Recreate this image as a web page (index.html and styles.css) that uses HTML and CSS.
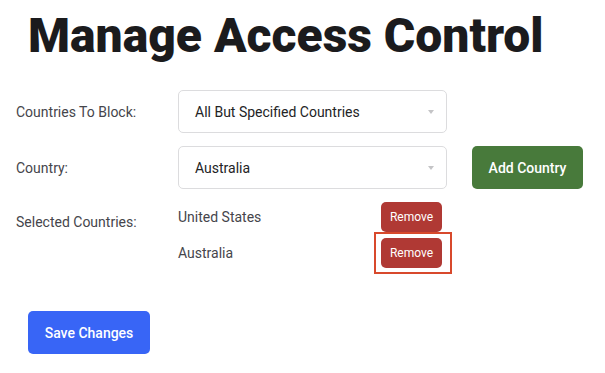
FILE: index.html
```html
<!DOCTYPE html>
<html lang="en">
<head>
    <meta charset="UTF-8">
    <title>Manage Access Control</title>
    <link rel="stylesheet" href="styles.css">
</head>
<body>

<!-- page title -->
<h1 class="title">Manage Access Control</h1>

<div class="form">
    <!-- block mode -->
    <div class="row">
        <label class="label">Countries To Block:</label>
        <div class="select">
            <span>All But Specified Countries</span>
            <span class="caret"></span>
        </div>
    </div>

    <!-- country picker -->
    <div class="row">
        <label class="label">Country:</label>
        <div class="select">
            <span>Australia</span>
            <span class="caret"></span>
        </div>
        <button class="btn btn-add">Add Country</button>
    </div>

    <!-- selected list -->
    <div class="row row-top">
        <label class="label label-list">Selected Countries:</label>
        <div class="selected-list">
            <div class="selected-item">
                <span class="country-name">United States</span>
                <button class="btn btn-remove">Remove</button>
            </div>
            <div class="selected-item">
                <span class="country-name">Australia</span>
                <button class="btn btn-remove highlighted">Remove</button>
            </div>
        </div>
    </div>
</div>

<div class="actions">
    <button class="btn btn-save">Save Changes</button>
</div>

</body>
</html>
```

FILE: styles.css
```css
body {
    font-family: Roboto, "Liberation Sans", sans-serif;
    background-color: #ffffff;
    color: #222;
    margin: 0;
    padding: 0 16px;
}

.title {
    margin: 8px 0 0 12px;
    font-size: 48px;
    font-weight: 900;
    line-height: 56px;
    color: #1b1b1d;
    letter-spacing: 0;
}

.form {
    margin-top: 26px;
    display: flex;
    flex-direction: column;
    gap: 13px;
}

.row {
    display: flex;
    align-items: center;
}

.row-top {
    align-items: flex-start;
}

.label {
    width: 162px;
    font-size: 14px;
    color: #45454b;
}

.label-list {
    padding-top: 12px;
}

.select {
    width: 269px;
    height: 43px;
    box-sizing: border-box;
    border: 1px solid #dcdcde;
    border-radius: 5px;
    display: flex;
    align-items: center;
    justify-content: space-between;
    padding: 0 12px 0 16px;
    font-size: 14px;
    color: #232325;
}

.caret {
    width: 0;
    height: 0;
    border-left: 3.5px solid transparent;
    border-right: 3.5px solid transparent;
    border-top: 4px solid #c4c4c6;
}

.btn {
    font-family: Roboto, "Liberation Sans", sans-serif;
    border: none;
    color: white;
    cursor: pointer;
    border-radius: 5px;
}

.btn-add {
    margin-left: 25px;
    width: 111px;
    height: 43px;
    background-color: #487a3b;
    font-size: 14px;
    font-weight: 500;
}

.selected-list {
    display: flex;
    flex-direction: column;
    gap: 6px;
}

.selected-item {
    display: flex;
    align-items: center;
    height: 30px;
}

.country-name {
    width: 203px;
    font-size: 14px;
    color: #45454b;
}

.btn-remove {
    position: relative;
    width: 61px;
    height: 30px;
    background-color: #b03934;
    font-size: 12px;
    padding: 0;
}

.highlighted::after {
    content: "";
    position: absolute;
    left: -7px;
    right: -10px;
    top: -6px;
    bottom: -6px;
    border: 2px solid #d8492c;
}

.actions {
    margin: 43px 0 0 12px;
}

.btn-save {
    width: 122px;
    height: 43px;
    background-color: #3865f6;
    font-size: 14px;
    font-weight: 500;
}
```
